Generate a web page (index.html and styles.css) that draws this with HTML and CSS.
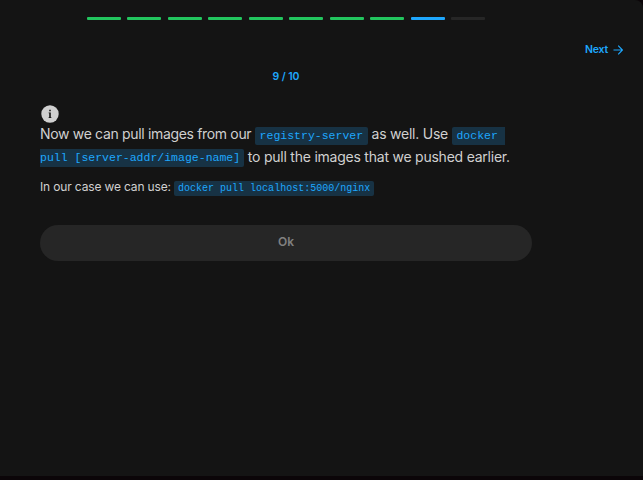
FILE: index.html
```html
<!DOCTYPE html>
<html lang="en">
<head>
<meta charset="utf-8">
<title>Lab question 9 / 10</title>
<link rel="stylesheet" href="styles.css">
</head>
<body>
<main class="panel">
<div class="progress">
<span class="step"></span><span class="step"></span><span class="step"></span><span class="step"></span><span class="step"></span><span class="step"></span><span class="step"></span><span class="step"></span><span class="step current"></span><span class="step pending"></span>
</div>
<nav class="nav"><a class="next">Next <svg class="arrow" viewBox="0 0 10 10"><path d="M0.5 5H9.3M5.2 0.7L9.5 5L5.2 9.3"/></svg></a></nav>
<div class="counter">9 / 10</div>
<section class="content">
<svg class="info" viewBox="0 0 18 18"><circle cx="9" cy="9" r="8.7"/><path d="M7.6 7.4H9.8V12.2H10.4V13H7.6V12.2H8.2V8.2H7.6ZM8.2 4.7H9.8V6.2H8.2Z"/></svg>
<p class="lead"><span class="opening">Now we can pull images from our </span><code>registry-server</code> as well. Use <code class="broken">docker&nbsp;</code><br><code class="continued">pull [server-addr/image-name]</code> to pull the images that we pushed earlier.</p>
<p class="detail">In our case we can use: <code>docker pull localhost:5000/nginx</code></p>
<button class="ok">Ok</button>
</section>
</main>
</body>
</html>
```

FILE: styles.css
```css
body { margin: 0; background: #0b0508; font-family: Inter, sans-serif; color: #d0d0d0; }
.panel { box-sizing: border-box; height: 476px; background: #141414; border-top-right-radius: 8px; padding-top: 17px; overflow: hidden; }
.progress { display: grid; grid-template-columns: repeat(10, 34px); gap: 6.44px; margin-left: 87px; }
.step { height: 3px; border-radius: 1px; background: #22c55e; }
.current { background: #1ea7fd; }
.pending { background: #262626; }
.nav { display: flex; justify-content: flex-end; margin: 22px 20px 0 0; }
.next { display: flex; align-items: center; gap: 5px; height: 15px; color: #1ea7fd; font-size: 10.5px; font-weight: 600; letter-spacing: -0.2px; }
.arrow { width: 10px; height: 10px; fill: none; stroke: currentColor; stroke-width: 1.2; }
.counter { width: 572px; margin-top: 12px; text-align: center; color: #1ea7fd; font-size: 10.5px; line-height: 15px; font-weight: 600; letter-spacing: -0.1px; }
.content { width: 492px; margin: 21px 0 0 40px; }
.info { display: block; width: 18px; height: 18px; margin-left: 1px; fill: #d0d0d0; }
.info path { fill: #141414; }
p { margin: 0; white-space: nowrap; }
.lead { margin-top: -1px; font-size: 14px; line-height: 23px; letter-spacing: -0.23px; }
.opening { letter-spacing: -0.33px; }
.detail { margin-top: 10px; font-size: 12px; line-height: 18px; letter-spacing: -0.15px; }
code { font-family: "Liberation Mono", monospace; line-height: 1; letter-spacing: 0; color: #1ea7fd; background: #173244; border-radius: 2px; }
.lead code { font-size: 11.5px; padding: 2px 4.7px 3px; }
.lead .broken { padding-right: 0; border-radius: 2px 0 0 2px; }
.lead .continued { padding-left: 0; padding-right: 4px; border-radius: 0 2px 2px 0; vertical-align: 1px; }
.detail code { font-size: 10px; padding: 2px 4px; }
.ok { display: block; width: 492px; height: 36px; margin-top: 29px; padding: 0 0 3px; border: 0; border-radius: 18px; background: #262626; color: #808080; font: 600 12px Inter, sans-serif; }
```
